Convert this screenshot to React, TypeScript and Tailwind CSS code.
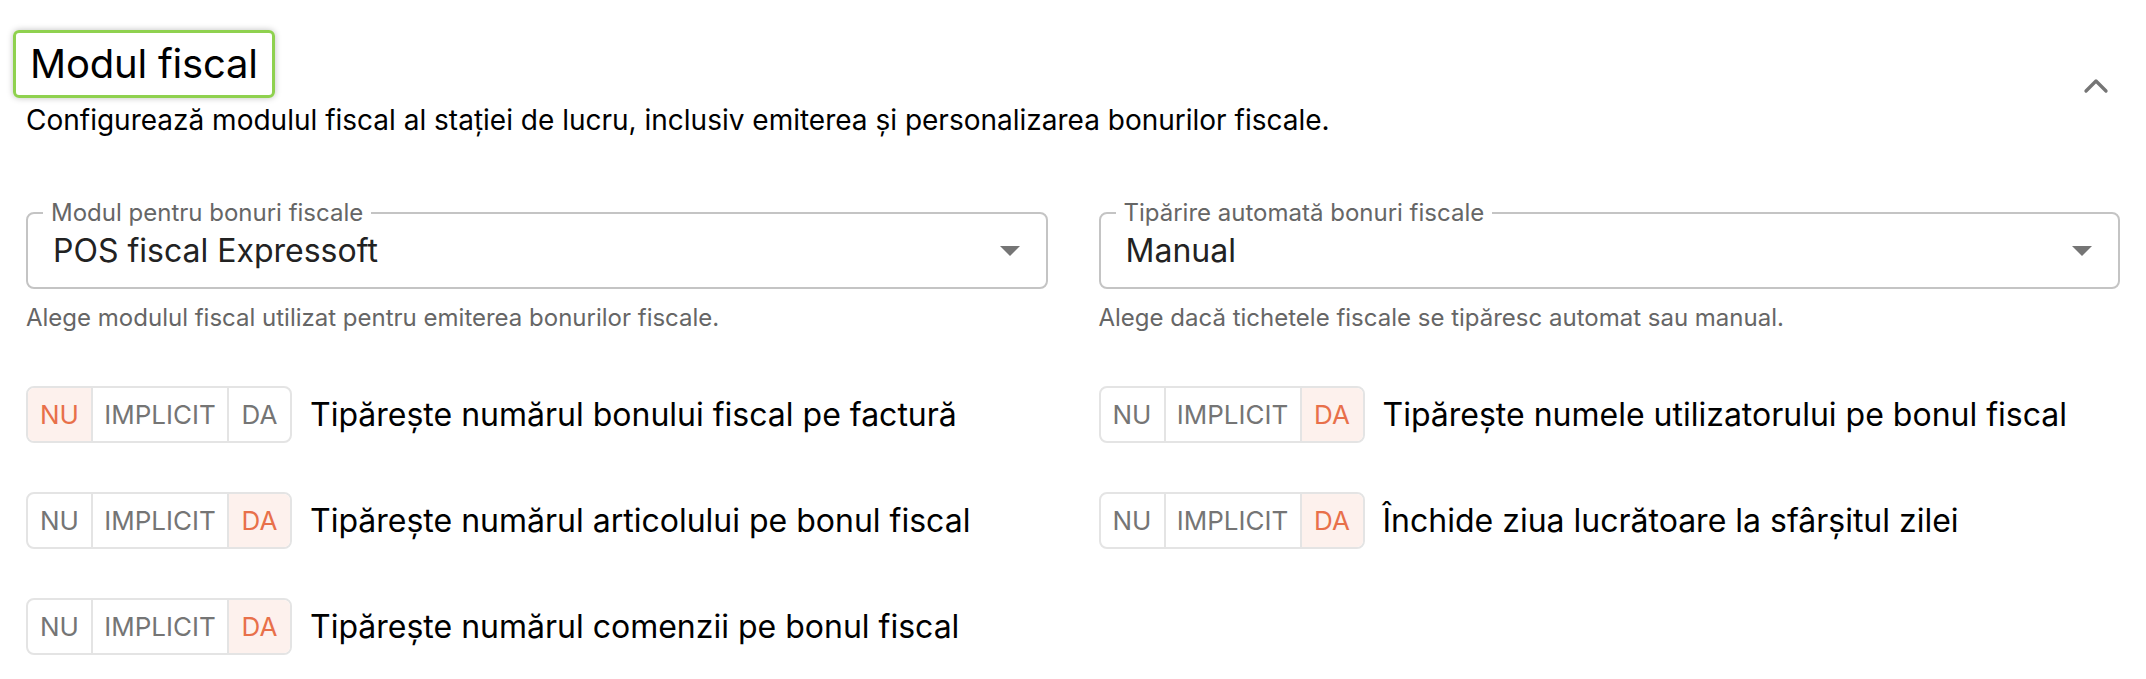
import { ChevronUp } from "lucide-react";

type Choice = "NU" | "IMPLICIT" | "DA";

const leftToggles: { label: string; value: Choice }[] = [
  { label: "Tipărește numărul bonului fiscal pe factură", value: "NU" },
  { label: "Tipărește numărul articolului pe bonul fiscal", value: "DA" },
  { label: "Tipărește numărul comenzii pe bonul fiscal", value: "DA" },
];

const rightToggles: { label: string; value: Choice }[] = [
  { label: "Tipărește numele utilizatorului pe bonul fiscal", value: "DA" },
  { label: "Închide ziua lucrătoare la sfârșitul zilei", value: "DA" },
];

export default function App() {
  return (
    <div className="min-h-screen bg-white px-[26px] pt-[30px] font-['Inter',sans-serif] text-black">
      <div className="flex items-start justify-between">
        <div>
          <h2 className="inline-block rounded-[6px] border-[3px] border-[#8fd14f] px-[14px] py-[7px] -ml-[13px] text-[40px] leading-[48px] font-normal tracking-[-0.2px] shadow-[0_0_6px_rgba(0,0,0,0.25)]">
            Modul fiscal
          </h2>
          <p className="mt-[4px] text-[28px] leading-[36px] text-black">
            Configurează modulul fiscal al stației de lucru, inclusiv emiterea și personalizarea bonurilor fiscale.
          </p>
        </div>
        <button className="mt-[36px] mr-[4px] text-[#757575]">
          <ChevronUp className="h-[40px] w-[40px]" strokeWidth={2} />
        </button>
      </div>

      <div className="mt-[62px] grid grid-cols-2 gap-x-[51px]">
        <SelectField label="Modul pentru bonuri fiscale" value="POS fiscal Expressoft" help="Alege modulul fiscal utilizat pentru emiterea bonurilor fiscale." />
        <SelectField label="Tipărire automată bonuri fiscale" value="Manual" help="Alege dacă tichetele fiscale se tipăresc automat sau manual." />
      </div>

      <div className="mt-[54px] grid grid-cols-2 gap-x-[51px]">
        <div className="flex flex-col gap-[49px]">
          {leftToggles.map((t) => (
            <ToggleRow key={t.label} {...t} />
          ))}
        </div>
        <div className="flex flex-col gap-[49px]">
          {rightToggles.map((t) => (
            <ToggleRow key={t.label} {...t} />
          ))}
        </div>
      </div>
    </div>
  );
}

function SelectField({ label, value, help }: { label: string; value: string; help: string }) {
  return (
    <div>
      <fieldset className="flex h-[89px] items-center rounded-[8px] border-[2px] border-[#c4c4c4] pr-[26px]">
        <legend className="ml-[15px] px-[8px] text-[24px] leading-[26px] text-[#666]">{label}</legend>
        <span className="-mt-[11px] flex-1 pl-[25px] text-[32px] leading-[38px] text-[#222]">{value}</span>
        <svg className="-mt-[11px] h-[10px] w-[20px]" viewBox="0 0 20 10">
          <path d="M0 0 L20 0 L10 10 Z" fill="#757575" />
        </svg>
      </fieldset>
      <p className="mt-[15px] text-[24px] leading-[28px] text-[#666]">{help}</p>
    </div>
  );
}

function ToggleRow({ label, value }: { label: string; value: Choice }) {
  const seg = (c: Choice, w: string, extra: string) => {
    const on = c === value;
    return (
      <span className={`flex h-full items-center justify-center ${w} ${extra} ${on ? "bg-[#fdf1ed] text-[#e8704a]" : "text-[#757575]"}`}>
        {c}
      </span>
    );
  };
  return (
    <div className="flex items-center gap-[18px]">
      <div className="flex h-[57px] overflow-hidden rounded-[8px] border-[2px] border-[#e4e4e4] text-[26px]">
        {seg("NU", "w-[63px]", "")}
        {seg("IMPLICIT", "w-[138px]", "border-l-[2px] border-r-[2px] border-[#e4e4e4]")}
        {seg("DA", "w-[61px]", "")}
      </div>
      <span className="text-[32px] leading-[38px] text-black">{label}</span>
    </div>
  );
}
